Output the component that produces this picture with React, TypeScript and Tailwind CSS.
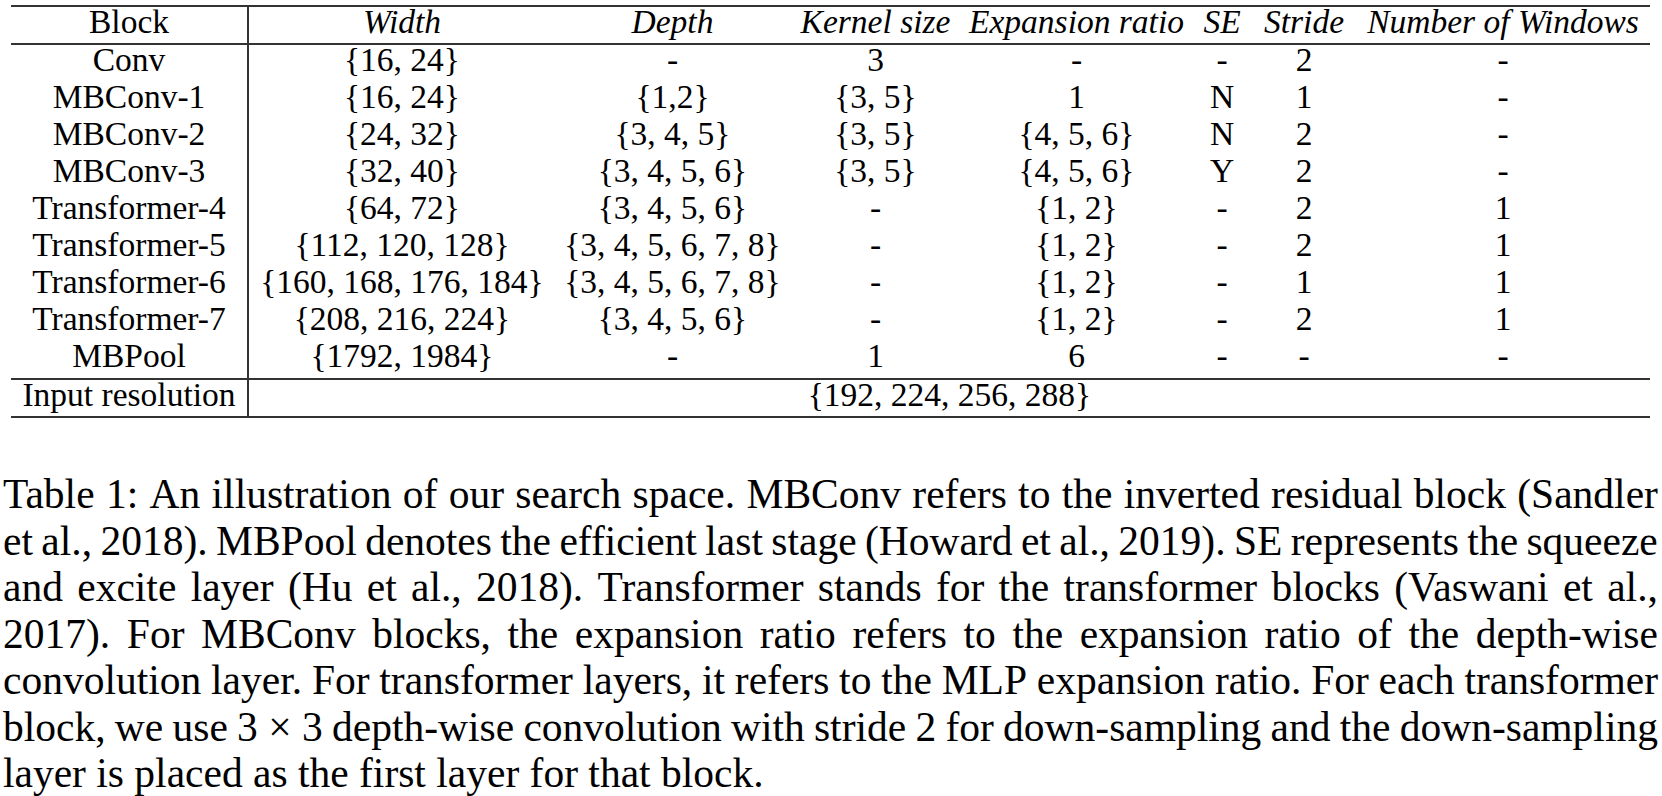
import React from "react";

const header = ["Block", "Width", "Depth", "Kernel size", "Expansion ratio", "SE", "Stride", "Number of Windows"];

const rows: string[][] = [
  ["Conv", "{16, 24}", "-", "3", "-", "-", "2", "-"],
  ["MBConv-1", "{16, 24}", "{1,2}", "{3, 5}", "1", "N", "1", "-"],
  ["MBConv-2", "{24, 32}", "{3, 4, 5}", "{3, 5}", "{4, 5, 6}", "N", "2", "-"],
  ["MBConv-3", "{32, 40}", "{3, 4, 5, 6}", "{3, 5}", "{4, 5, 6}", "Y", "2", "-"],
  ["Transformer-4", "{64, 72}", "{3, 4, 5, 6}", "-", "{1, 2}", "-", "2", "1"],
  ["Transformer-5", "{112, 120, 128}", "{3, 4, 5, 6, 7, 8}", "-", "{1, 2}", "-", "2", "1"],
  ["Transformer-6", "{160, 168, 176, 184}", "{3, 4, 5, 6, 7, 8}", "-", "{1, 2}", "-", "1", "1"],
  ["Transformer-7", "{208, 216, 224}", "{3, 4, 5, 6}", "-", "{1, 2}", "-", "2", "1"],
  ["MBPool", "{1792, 1984}", "-", "1", "6", "-", "-", "-"],
];

const captionLines = [
  "Table 1: An illustration of our search space. MBConv refers to the inverted residual block (Sandler",
  "et al., 2018). MBPool denotes the efficient last stage (Howard et al., 2019). SE represents the squeeze",
  "and excite layer (Hu et al., 2018). Transformer stands for the transformer blocks (Vaswani et al.,",
  "2017). For MBConv blocks, the expansion ratio refers to the expansion ratio of the depth-wise",
  "convolution layer. For transformer layers, it refers to the MLP expansion ratio. For each transformer",
  "block, we use 3\u00a0×\u00a03 depth-wise convolution with stride 2 for down-sampling and the down-sampling",
];
const lastLine = "layer is placed as the first layer for that block.";

const gridCols = "grid grid-cols-[238px_306px_235px_171px_231px_60px_104px_294px]";

function Rule() {
  return <div className="h-[2px] bg-[#333333]" />;
}

export default function App() {
  return (
    <div className="w-[1662px] h-[796px] bg-white text-black pt-[5px] font-['Liberation_Serif',serif] overflow-hidden">
      {/* Table */}
      <div className="ml-[11px] w-[1639px] text-[33.5px]">
        <Rule />
        <div className={`${gridCols} h-[36px] leading-[29px]`}>
          {header.map((h, i) => (
            <div
              key={h}
              className={`text-center whitespace-nowrap ${i === 0 ? "border-r-2 border-[#333333]" : "italic"}`}
            >
              {h}
            </div>
          ))}
        </div>
        <Rule />
        {rows.map((r) => (
          <div key={r[0]} className={`${gridCols} h-[37px] leading-[29px]`}>
            {r.map((c, i) => (
              <div
                key={i}
                className={`text-center whitespace-nowrap ${i === 0 ? "border-r-2 border-[#333333]" : ""}`}
              >
                {c}
              </div>
            ))}
          </div>
        ))}
        <Rule />
        <div className={`${gridCols} h-[36px] leading-[29px]`}>
          <div className="text-center whitespace-nowrap border-r-2 border-[#333333]">Input resolution</div>
          <div className="col-span-7 text-center whitespace-nowrap">{"{192, 224, 256, 288}"}</div>
        </div>
        <Rule />
      </div>

      {/* Caption */}
      <div className="mt-[53px] ml-[3px] w-[1655px] text-[41.5px] leading-[46.5px]">
        {captionLines.map((line, li) => (
          <div key={li} className="flex justify-between whitespace-nowrap">
            {line.split(" ").map((w, wi) => (
              <span key={wi}>{w}</span>
            ))}
          </div>
        ))}
        <div className="whitespace-nowrap">{lastLine}</div>
      </div>
    </div>
  );
}
